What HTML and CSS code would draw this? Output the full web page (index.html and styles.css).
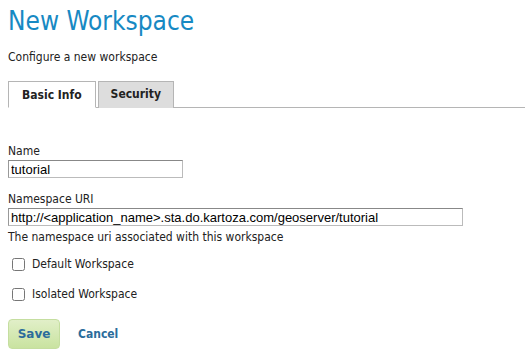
FILE: index.html
```html
<!DOCTYPE html>
<html lang="en">
<head>
  <meta charset="UTF-8" />
  <title>New Workspace</title>
  <link rel="stylesheet" href="styles.css">
</head>
<body>
  <div id="page">
    <h1>New Workspace</h1>
    <p class="intro">Configure a new workspace</p>

    <ul class="tabs">
      <li class="tab active">Basic Info</li>
      <li class="tab">Security</li>
    </ul>

    <form class="ws-form">
      <div class="field">
        <label for="ws-name">Name</label>
        <input type="text" id="ws-name" class="name-input" value="tutorial" />
      </div>
      <div class="field">
        <label for="ws-uri">Namespace URI</label>
        <input type="text" id="ws-uri" class="uri-input" value="http://<application_name>.sta.do.kartoza.com/geoserver/tutorial" />
        <span class="help">The namespace uri associated with this workspace</span>
      </div>
      <div class="checks">
        <div class="check">
          <input type="checkbox" id="ws-default" />
          <label for="ws-default">Default Workspace</label>
        </div>
        <div class="check">
          <input type="checkbox" id="ws-isolated" />
          <label for="ws-isolated">Isolated Workspace</label>
        </div>
      </div>
      <div class="buttons">
        <button type="button" class="btn-save">Save</button>
        <a href="#" class="btn-cancel">Cancel</a>
      </div>
    </form>
  </div>
</body>
</html>
```

FILE: styles.css
```css
* { box-sizing: border-box; }
body {
  margin: 0;
  background: #fff;
  font-family: "DejaVu Sans", sans-serif;
  font-stretch: condensed;
  color: #222;
}
#page { padding: 4px 0 0 8px; }
h1 {
  margin: 0;
  font-family: "DejaVu Sans", sans-serif;
  font-stretch: condensed;
  font-weight: normal;
  font-size: 26px;
  line-height: 34px;
  color: #1789c3;
}
.intro { margin: 11px 0 0; font-size: 12px; line-height: 16px; }
.tabs {
  list-style: none; margin: 16px 0 0; padding: 0;
  display: flex; gap: 2px;
  border-bottom: 1px solid #b5b5b5;
}
.tab {
  font-size: 12px; font-weight: bold;
  padding: 5px 12px 5px;
  line-height: 14px;
  border: 1px solid #b5b5b5; border-bottom: none;
  background: #ddd;
  margin-bottom: -1px;
}
.tab.active { background: #fff; padding: 6px 13px 5px; border-bottom: 1px solid #fff; }
.ws-form { padding-top: 36px; }
.field { display: flex; flex-direction: column; align-items: flex-start; margin-bottom: 14px; }
.field label { font-size: 12px; line-height: 14px; margin-bottom: 2px; }
input[type="text"] {
  font-family: "Liberation Sans", Arial, sans-serif;
  font-stretch: normal;
  font-size: 13px;
  color: #000;
  height: 18px;
  padding: 0 2px;
  border: 1px solid #bbb;
  border-top-color: #888;
  border-left-color: #999;
  margin: 0;
}
.name-input { width: 175px; }
.uri-input { width: 455px; height: 19px; }
.help { font-size: 12px; line-height: 14px; margin-top: 4px; }
.checks { margin-top: -9px; }
.check { display: flex; align-items: center; height: 30px; margin-left: 4px; }
.check input { margin: 0 7px 0 0; width: 13px; height: 13px; }
.check label { font-size: 12px; }
.buttons { display: flex; align-items: center; gap: 18px; margin-top: 10px; }
.btn-save {
  width: 52px; height: 30px;
  border: 1px solid #c5dea0; border-radius: 4px;
  background: linear-gradient(#e1efc8, #c9e3a0);
  color: #2b6c9b; font-weight: bold; font-size: 12px;
  font-family: inherit;
  cursor: pointer;
}
.btn-cancel { color: #2b6c9b; font-weight: bold; font-size: 12px; text-decoration: none; }
```
